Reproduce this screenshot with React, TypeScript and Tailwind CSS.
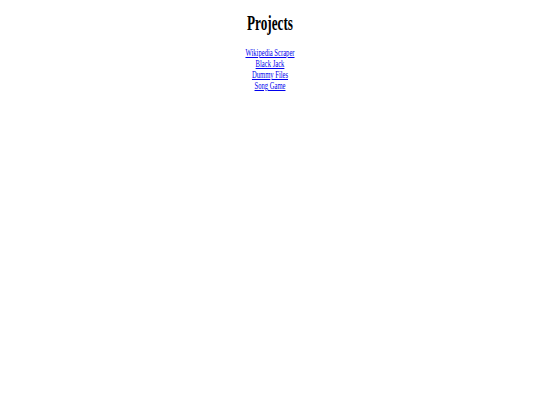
const projects = ['Wikipedia Scraper', 'Black Jack', 'Dummy Files', 'Song Game'];

export default function App() {
  return (
    <div className="min-h-[405px] w-full bg-white text-black font-['Liberation_Serif',serif]">
      {/* page looks horizontally squeezed, so squeeze the text the same way */}
      <div className="origin-top scale-x-[0.66] text-center">
        <h1 className="pt-[12px] pb-[13px] text-[20px] leading-[22px] font-bold">Projects</h1>
        <ul className="flex flex-col items-center">
          {projects.map((name) => (
            <li key={name} className="text-[10px] leading-[11px]">
              <a href="#" className="text-[#0000ee] underline">
                {name}
              </a>
            </li>
          ))}
        </ul>
      </div>
    </div>
  );
}
